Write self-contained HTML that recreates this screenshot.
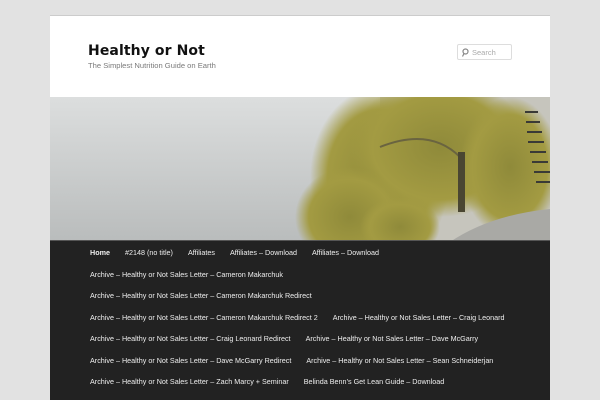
<!DOCTYPE html>
<html><head><style>
*{margin:0;padding:0;box-sizing:border-box}
html,body{width:600px;height:400px;overflow:hidden}
body{background:#e2e2e2;font-family:"Liberation Sans",sans-serif;position:relative}
#page{position:absolute;left:50px;top:15px;width:500px;height:385px;background:#fff;border-top:1px solid #ccc;overflow:hidden}
h1{position:absolute;left:38px;top:27px;font:bold 14px "DejaVu Sans",sans-serif;color:#111;letter-spacing:.1px}
.tag{position:absolute;left:38px;top:45px;font-size:7.6px;color:#7a7a7a}
.search{position:absolute;left:407px;top:28px;width:55px;height:16px;border:1px solid #ddd;border-radius:2px;font-size:7.5px;color:#aaa;padding:3px 0 0 14px}
.search svg{position:absolute;left:3px;top:3px}
#hdr{position:absolute;left:0;top:81px;width:500px;height:145px}
nav{position:absolute;left:0;top:225px;width:500px;height:200px;background:#222}
nav .r{position:absolute;left:40px;font-size:7.2px;color:#eee;white-space:nowrap}
nav .r span{margin-right:15px}
</style></head><body>
<div id="page">
<h1>Healthy or Not</h1>
<div class="tag">The Simplest Nutrition Guide on Earth</div>
<div class="search"><svg width="8" height="9" viewBox="0 0 8 9"><circle cx="4.5" cy="3.5" r="2.5" fill="none" stroke="#888" stroke-width="1.2"/><path d="M3 5.5L1.5 8.5" stroke="#888" stroke-width="1.2"/></svg>Search</div>
<svg id="hdr" viewBox="0 0 500 145" preserveAspectRatio="none">
<defs><linearGradient id="w" x1="0" y1="0" x2="0" y2="1"><stop offset="0" stop-color="#dcdede"/><stop offset="1" stop-color="#b9bcbc"/></linearGradient>
<radialGradient id="t" cx=".5" cy=".5" r=".5"><stop offset="0" stop-color="#8f8a3a"/><stop offset=".75" stop-color="#a39b42"/><stop offset="1" stop-color="#a39b42" stop-opacity="0"/></radialGradient></defs>
<rect width="500" height="145" fill="url(#w)"/>
<rect x="330" y="0" width="170" height="145" fill="#c6c5bd"/>
<ellipse cx="330" cy="80" rx="70" ry="90" fill="url(#t)"/>
<ellipse cx="390" cy="50" rx="90" ry="70" fill="url(#t)"/>
<ellipse cx="300" cy="120" rx="55" ry="50" fill="url(#t)"/>
<ellipse cx="460" cy="70" rx="50" ry="70" fill="url(#t)"/>
<ellipse cx="350" cy="130" rx="40" ry="30" fill="url(#t)"/>
<path d="M330 50Q380 30 410 60" stroke="#6a6440" stroke-width="2" fill="none"/>
<rect x="408" y="55" width="7" height="60" fill="#4a4632"/>
<path d="M400 145Q440 118 500 112L500 145Z" fill="#a9a9a5"/>
<g stroke="#3a3a36" stroke-width="2">
<line x1="475" y1="15" x2="488" y2="15"/><line x1="476" y1="25" x2="490" y2="25"/><line x1="477" y1="35" x2="492" y2="35"/><line x1="478" y1="45" x2="494" y2="45"/><line x1="480" y1="55" x2="496" y2="55"/><line x1="482" y1="65" x2="498" y2="65"/><line x1="484" y1="75" x2="500" y2="75"/><line x1="486" y1="85" x2="500" y2="85"/></g>
<rect y="143" width="500" height="2" fill="#555"/>
</svg>
<nav>
<div class="r" style="top:7px"><span style="font-weight:bold">Home</span><span>#2148 (no title)</span><span>Affiliates</span><span>Affiliates – Download</span><span>Affiliates – Download</span></div>
<div class="r" style="top:28.5px"><span>Archive – Healthy or Not Sales Letter – Cameron Makarchuk</span></div>
<div class="r" style="top:50px"><span>Archive – Healthy or Not Sales Letter – Cameron Makarchuk Redirect</span></div>
<div class="r" style="top:71.5px"><span>Archive – Healthy or Not Sales Letter – Cameron Makarchuk Redirect 2</span><span>Archive – Healthy or Not Sales Letter – Craig Leonard</span></div>
<div class="r" style="top:93px"><span>Archive – Healthy or Not Sales Letter – Craig Leonard Redirect</span><span>Archive – Healthy or Not Sales Letter – Dave McGarry</span></div>
<div class="r" style="top:114.5px"><span>Archive – Healthy or Not Sales Letter – Dave McGarry Redirect</span><span>Archive – Healthy or Not Sales Letter – Sean Schneiderjan</span></div>
<div class="r" style="top:136px"><span>Archive – Healthy or Not Sales Letter – Zach Marcy + Seminar</span><span>Belinda Benn’s Get Lean Guide – Download</span></div>
<div class="r" style="top:157.5px"><span>Archive – Healthy or Not Sales Letter – Zach Marcy Redirect</span><span>Archive – Healthy or Not Sales Letter – Download</span></div>
</nav>
</div>
</body></html>
